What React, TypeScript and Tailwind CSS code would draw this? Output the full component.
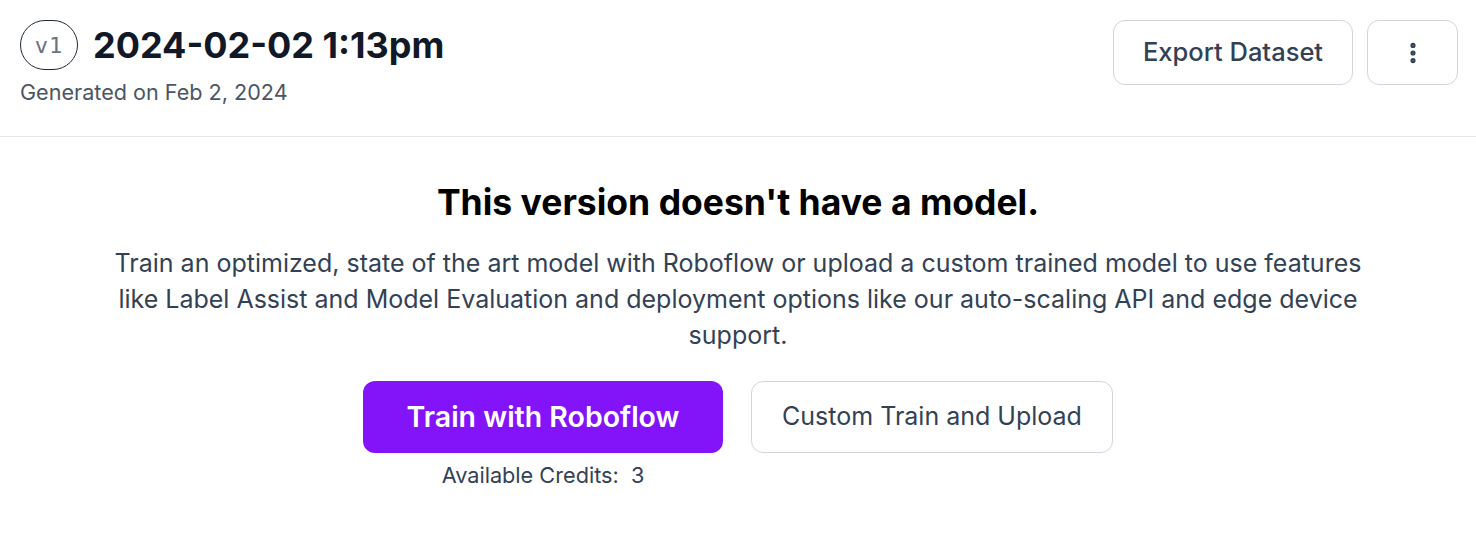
import { EllipsisVertical } from "lucide-react"

const font = { fontFamily: "Inter, 'Noto Sans', sans-serif" }

function VersionHeader() {
  return (
    <header className="flex items-start justify-between border-b border-[#e5e7eb] pt-5 pr-[18px] pb-[30px] pl-5">
      <div className="flex flex-col">
        <div className="flex items-center gap-[15px]">
          <span className="flex h-[50px] w-[58px] items-center justify-center rounded-full border border-[#1f2937] font-['DejaVu_Sans_Mono',monospace] text-[22px] tracking-[1px] text-[#6b7280]">
            v1
          </span>
          <h1 className="text-[36px] font-bold leading-[40px] text-[#111827]">2024-02-02 1:13pm</h1>
        </div>
        <p className="mt-[8px] text-[21.6px] leading-[28px] text-[#4b5563]">Generated on Feb 2, 2024</p>
      </div>
      <div className="flex items-center gap-[14px]">
        <button className="h-[65px] w-[240px] rounded-[12px] border border-[#d1d5db] bg-white text-[25.5px] font-medium text-[#334155]">
          Export Dataset
        </button>
        <button className="flex h-[65px] w-[91px] items-center justify-center rounded-[12px] border border-[#d1d5db] bg-white text-[#334155]">
          <EllipsisVertical size={26} strokeWidth={2.75} />
        </button>
      </div>
    </header>
  )
}

export default function App() {
  return (
    <div className="min-h-[540px] w-full bg-white" style={font}>
      <VersionHeader />
      <main className="mx-auto flex max-w-[1280px] flex-col items-center pt-[44px] text-center">
        <h2 className="text-[35.5px] font-bold leading-[44px] text-black">This version doesn't have a model.</h2>
        <p className="mt-[20px] max-w-[1280px] text-[25px] leading-[36px] text-[#334155]">
          Train an optimized, state of the art model with Roboflow or upload a custom trained model to use features like
          Label Assist and Model Evaluation and deployment options like our auto-scaling API and edge device support.
        </p>
        <div className="mt-[28px] flex items-start gap-[28px]">
          <div className="flex flex-col items-center">
            <button className="h-[72px] w-[360px] rounded-[12px] bg-[#8313f9] text-[28.5px] font-semibold text-white">
              Train with Roboflow
            </button>
            <span className="mt-[8px] text-[21.7px] leading-[28px] text-[#334155]">Available Credits:&nbsp;&nbsp;3</span>
          </div>
          <button className="h-[72px] w-[362px] rounded-[12px] border border-[#d1d5db] bg-white text-[25px] text-[#334155]">
            Custom Train and Upload
          </button>
        </div>
      </main>
    </div>
  )
}
